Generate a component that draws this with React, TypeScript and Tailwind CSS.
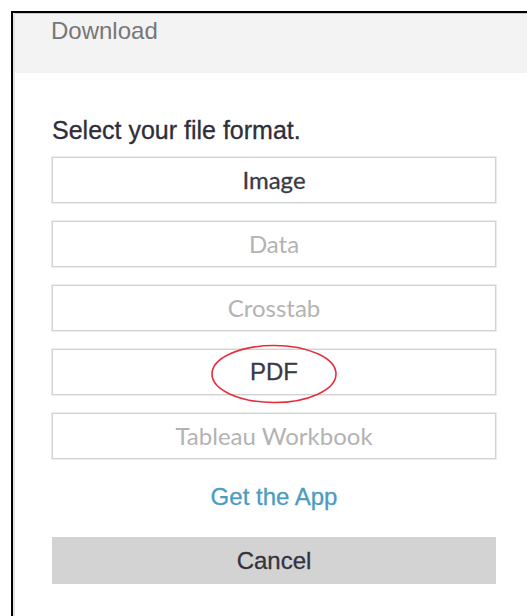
import React from "react";

const formats = [
  { label: "Image", enabled: true, font: "lato" },
  { label: "Data", enabled: false, font: "lato" },
  { label: "Crosstab", enabled: false, font: "lato" },
  { label: "PDF", enabled: true, font: "arial", circled: true },
  { label: "Tableau Workbook", enabled: false, font: "lato" },
];

function FormatButton({
  label,
  enabled,
  font,
  circled,
}: {
  label: string;
  enabled: boolean;
  font: string;
  circled?: boolean;
}) {
  return (
    <div
      className={
        "relative flex h-[46px] w-[444px] items-center justify-center border border-[#d2d2d2] bg-white shadow-[0_0_0_1px_#ececec] text-[24px] " +
        (enabled
          ? "text-[#3a3a44] [-webkit-text-stroke:0.3px_#3a3a44] "
          : "text-[#b3b3b3] ") +
        (font === "lato"
          ? "font-['Lato','Liberation_Sans',sans-serif]"
          : "font-['Liberation_Sans',Arial,sans-serif]")
      }
    >
      <span className="leading-none">{label}</span>
      {circled && (
        <svg
          className="pointer-events-none absolute left-[156px] top-[-7px]"
          width="130"
          height="62"
          viewBox="0 0 130 62"
        >
          <ellipse
            cx="65"
            cy="31"
            rx="62"
            ry="28.5"
            fill="none"
            stroke="#e62e3c"
            strokeWidth="1.6"
          />
        </svg>
      )}
    </div>
  );
}

export default function App() {
  return (
    <div className="h-[616px] w-[527px] overflow-hidden bg-white pl-[11px] pt-[11px]">
      <div className="flex h-[605px] flex-col border-l-2 border-t-2 border-black">
        <div className="flex h-full flex-col border-l-2 border-[#e2e2e2]">
          <div className="h-[60px] border-t border-[#c9c9c9] bg-[#f3f3f3] pl-[36px] pt-[3px]">
            <span className="font-['Liberation_Sans',Arial,sans-serif] text-[24px] leading-[28px] text-[#777777]">
              Download
            </span>
          </div>
          <div className="flex flex-col pl-[37px]">
            <div className="mt-[43px] font-['Liberation_Sans',Arial,sans-serif] text-[25px] leading-[28px] text-[#2e2e3a] [-webkit-text-stroke:0.3px_#2e2e3a]">
              Select your file format.
            </div>
            <div className="mt-[13px] flex flex-col gap-[18px]">
              {formats.map((f) => (
                <FormatButton key={f.label} {...f} />
              ))}
            </div>
            <div className="mt-[24px] w-[444px] text-center font-['Liberation_Sans',Arial,sans-serif] text-[24px] leading-[28px] text-[#4b9cc0] [-webkit-text-stroke:0.3px_#4b9cc0]">
              Get the App
            </div>
            <div className="mt-[26px] flex h-[47px] w-[444px] items-center justify-center bg-[#d3d3d3] font-['Liberation_Sans',Arial,sans-serif] text-[24px] text-[#333340] [-webkit-text-stroke:0.3px_#333340]">
              Cancel
            </div>
          </div>
        </div>
      </div>
    </div>
  );
}
